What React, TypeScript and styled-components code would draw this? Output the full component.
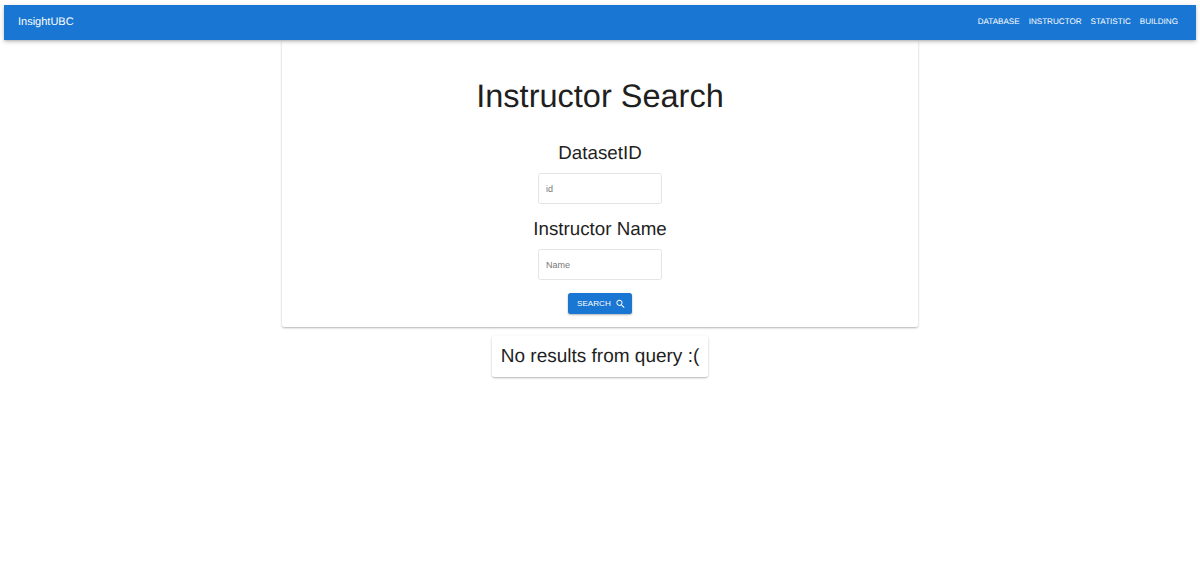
import React from 'react';
import styled, { createGlobalStyle } from 'styled-components';

const GlobalStyle = createGlobalStyle`
  html, body {
    margin: 0;
    padding: 0;
    background: #fff;
    font-family: "Liberation Sans", Arial, sans-serif;
    text-rendering: geometricPrecision;
  }
  body {
    min-height: 100vh;
    padding: 5px 4px 0;
  }
  * {
    box-sizing: border-box;
  }
`;

const AppBar = styled.header`
  display: flex;
  align-items: center;
  justify-content: space-between;
  height: 35px;
  padding: 0 13.5px 0 14px;
  background: #1976d2;
  color: #fff;
  box-shadow: 0 1px 2px -1px rgba(0, 0, 0, 0.2), 0 2px 3px rgba(0, 0, 0, 0.14), 0 1px 6px rgba(0, 0, 0, 0.12);
  position: relative;
  z-index: 2;
`;

const Brand = styled.div`
  font-size: 11px;
  line-height: 1;
`;

const Nav = styled.nav`
  display: flex;
`;

const NavLink = styled.a`
  padding: 0 4.5px;
  font-size: 8.1px;
  line-height: 1;
  text-transform: uppercase;
  color: #fff;
`;

const Main = styled.main`
  display: flex;
  flex-direction: column;
  align-items: center;
  padding-bottom: 20px;
`;

const SearchCard = styled.section`
  display: flex;
  flex-direction: column;
  align-items: center;
  width: 636px;
  height: 287px;
  padding-top: 35px;
  background: #fff;
  border-radius: 2.5px;
  box-shadow: 0 1px 2px -1px rgba(0, 0, 0, 0.2), 0 1px 2px rgba(0, 0, 0, 0.14), 0 1px 3px rgba(0, 0, 0, 0.12);
`;

const Title = styled.h1`
  margin: 0;
  font-size: 32.5px;
  line-height: 42px;
  font-weight: 400;
  color: #1f1f1f;
`;

const Label = styled.h2<{ $top: number }>`
  margin: ${(p) => p.$top}px 0 0;
  font-size: 18.75px;
  line-height: 25px;
  font-weight: 400;
  color: #1f1f1f;
`;

const Field = styled.input`
  display: block;
  width: 124px;
  height: 31px;
  margin-top: 8px;
  padding: 0 7px;
  border: 1px solid #e4e4e4;
  border-radius: 2.5px;
  outline: none;
  background: #fff;
  font-family: inherit;
  font-size: 9px;
  color: #333;
  &::placeholder {
    color: #777;
    opacity: 1;
  }
`;

const SearchButton = styled.button`
  display: flex;
  align-items: center;
  gap: 4px;
  width: 64px;
  height: 21px;
  margin-top: 13px;
  padding: 0 6px 0 9px;
  border: 0;
  border-radius: 2.5px;
  background: #1976d2;
  color: #fff;
  font-family: inherit;
  font-size: 8.1px;
  text-transform: uppercase;
  box-shadow: 0 1px 2px -1px rgba(0, 0, 0, 0.2), 0 1px 2px rgba(0, 0, 0, 0.14), 0 1px 3px rgba(0, 0, 0, 0.12);
`;

const ResultCard = styled.div`
  display: flex;
  flex-shrink: 0;
  align-items: center;
  height: 41px;
  margin-top: 9px;
  padding: 0 8.5px;
  background: #fff;
  border-radius: 2.5px;
  font-size: 19px;
  color: #1f1f1f;
  box-shadow: 0 1px 2px -1px rgba(0, 0, 0, 0.2), 0 1px 2px rgba(0, 0, 0, 0.14), 0 1px 3px rgba(0, 0, 0, 0.12);
`;

const SearchIcon = () => (
  <svg width="12" height="12" viewBox="0 0 24 24" fill="currentColor" aria-hidden="true">
    <path d="M15.5 14h-.79l-.28-.27C15.41 12.59 16 11.11 16 9.5 16 5.91 13.09 3 9.5 3S3 5.91 3 9.5 5.91 16 9.5 16c1.61 0 3.09-.59 4.23-1.57l.27.28v.79l5 4.99L20.49 19l-4.99-5zm-6 0C7.01 14 5 11.99 5 9.5S7.01 5 9.5 5 14 7.01 14 9.5 11.99 14 9.5 14z" />
  </svg>
);

const links = ['Database', 'Instructor', 'Statistic', 'Building'];

export default function App(): JSX.Element {
  return (
    <>
      <GlobalStyle />
      <AppBar>
        <Brand>InsightUBC</Brand>
        <Nav>
          {links.map((link) => (
            <NavLink key={link}>{link}</NavLink>
          ))}
        </Nav>
      </AppBar>
      <Main>
        <SearchCard>
          <Title>Instructor Search</Title>
          <Label $top={23}>DatasetID</Label>
          <Field placeholder="id" />
          <Label $top={12}>Instructor Name</Label>
          <Field placeholder="Name" />
          <SearchButton>
            Search
            <SearchIcon />
          </SearchButton>
        </SearchCard>
        <ResultCard>No results from query :(</ResultCard>
      </Main>
    </>
  );
}
